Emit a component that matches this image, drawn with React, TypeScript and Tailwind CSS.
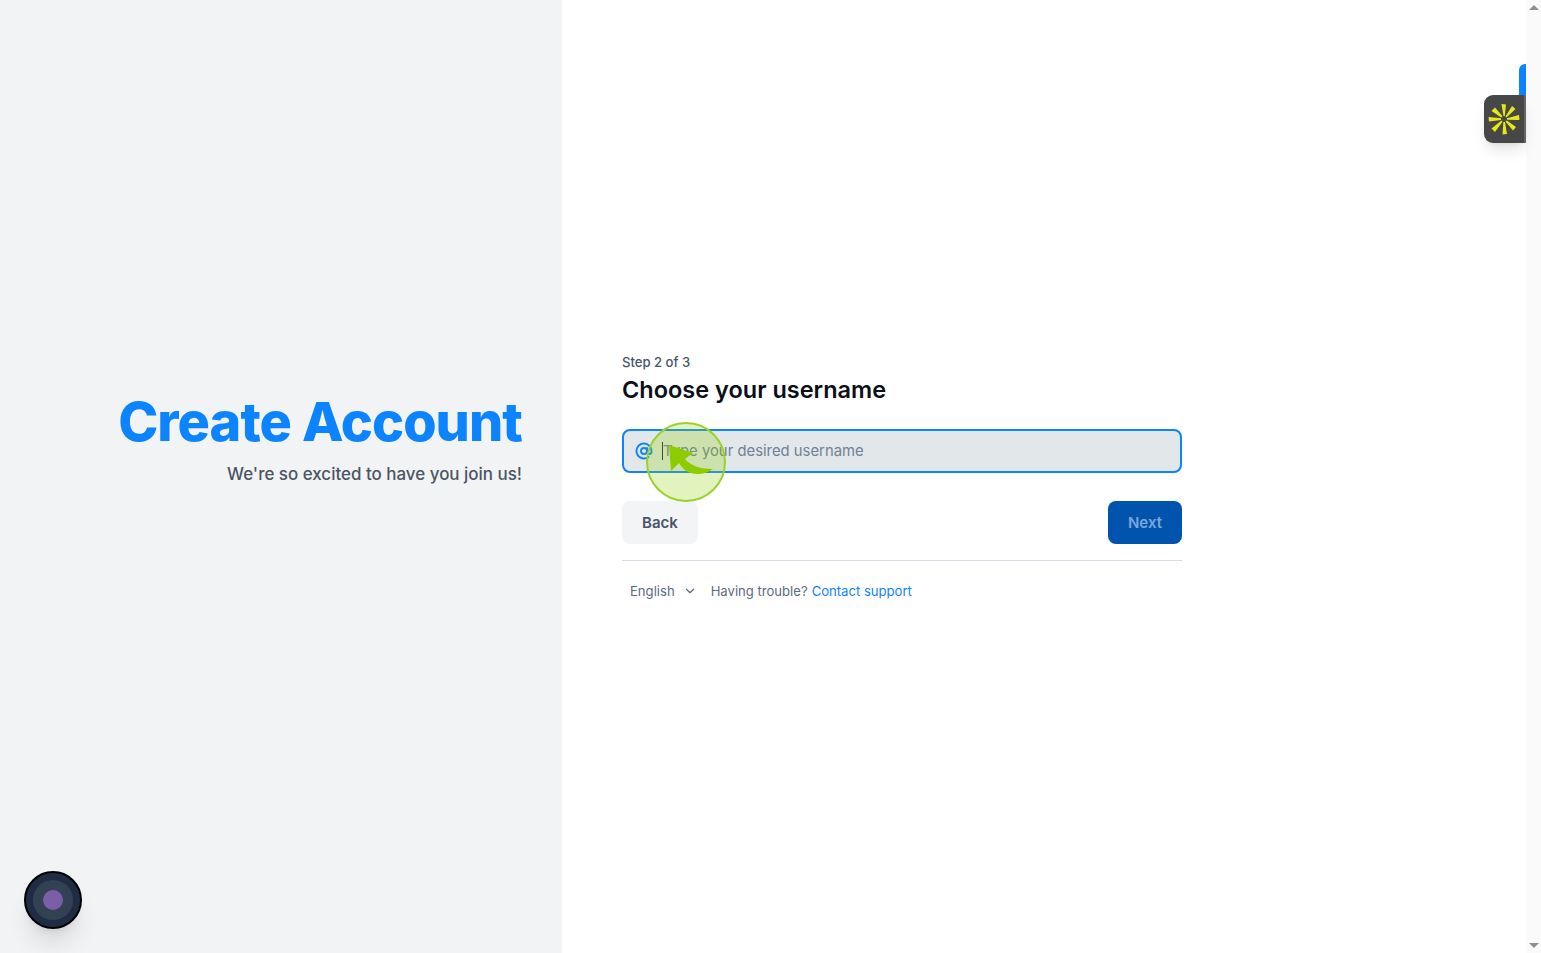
import React from "react";
import { AtSign, ChevronDown } from "lucide-react";

const font = { fontFamily: "Inter, 'Noto Sans', sans-serif" };

const Scrollbar = () => (
  <div className="w-[15px] h-full bg-[#fafafa] flex flex-col items-center justify-between shrink-0 py-[5px]">
    <div className="w-0 h-0 border-x-[5px] border-x-transparent border-b-[5px] border-b-[#8f8f8f]" />
    <div className="w-0 h-0 border-x-[5px] border-x-transparent border-t-[5px] border-t-[#8f8f8f]" />
  </div>
);

const ClickMarker = () => (
  <div className="absolute left-[22px] top-[-9px] w-[80px] h-[80px] rounded-full border-2 border-[#9bd22a] bg-[#8fce00]/25 pointer-events-none">
    <svg viewBox="0 0 80 80" className="absolute -left-[2px] -top-[2px] w-[80px] h-[80px]">
      <path
        d="M23 23 L47 31 L39 37 C45 44 55 47 67 47 C60 52 52 53 45 51 C40 50 36 46 33 41 L25 49 Z"
        fill="#8ccc00"
      />
    </svg>
  </div>
);

const HelperTab = () => (
  <div className="absolute top-[64px] right-[15px] flex flex-col items-end">
    <div className="w-[7px] h-[31px] bg-[#0d84ff] rounded-tl-[6px]" />
    <div className="w-[42px] h-[48px] bg-[#474747] rounded-l-[9px] border-r-2 border-r-[#666666] shadow-lg flex items-center justify-center">
      <svg viewBox="0 0 32 32" className="w-[32px] h-[32px]" fill="#e6ea12">
        <path d="M13.5 1 L18 1.5 L16.8 13 L15.5 13 Z" />
        <path d="M24 3 L27.5 6 L18.5 14.5 L17.5 13.5 Z" />
        <path d="M31 12 L31.5 17 L19 16.8 L19 15.2 Z" />
        <path d="M28 24 L25 27.5 L17.5 18.5 L18.8 17.5 Z" />
        <path d="M19 31 L14.5 31.5 L15.4 19 L17 19 Z" />
        <path d="M7 29 L3.5 25.5 L13.5 17.5 L14.5 18.8 Z" />
        <path d="M1 18.5 L0.5 14 L13 15.3 L13 17 Z" />
        <path d="M3.5 8 L7 4.5 L14.5 13.3 L13.2 14.5 Z" />
      </svg>
    </div>
  </div>
);

export default function App() {
  return (
    <div className="relative flex h-[953px] w-full overflow-hidden bg-white" style={font}>
      <div className="relative w-[562px] h-full bg-[#f2f3f5] flex flex-col items-end justify-center pr-10 pb-[73px] shrink-0">
        <h1 className="text-[54px] leading-[60px] font-extrabold text-[#0d84ff] tracking-[-0.95px]">Create Account</h1>
        <p className="mt-[8px] text-[16.95px] leading-[28px] font-medium text-[#4b5563]">We're so excited to have you join us!</p>

        <div className="absolute left-[24px] bottom-[24px] w-[58px] h-[58px] rounded-full bg-[#1f2c44] border-2 border-black shadow-xl flex items-center justify-center">
          <div className="w-[40px] h-[40px] rounded-full bg-[#334155] flex items-center justify-center">
            <div className="w-[20px] h-[20px] rounded-full bg-[#7b5ea7]" />
          </div>
        </div>
      </div>

      <div className="flex-1 h-full flex flex-col justify-center pl-[60px]">
        <div className="w-[560px]">
          <p className="text-[13.1px] leading-[20px] font-medium text-[#475569]">Step 2 of 3</p>
          <h2 className="mt-[2px] text-[23.5px] leading-[32px] font-semibold text-[#0b0f19]">Choose your username</h2>

          <div className="relative mt-[23px] h-[44px] rounded-lg border-2 border-[#0d84ff] bg-[#e2e7ea] flex items-center pl-[11px]">
            <AtSign className="w-[18px] h-[18px] text-[#0d84ff] shrink-0" strokeWidth={2.5} />
            <span className="ml-[9px] w-px h-[18px] bg-[#1f2937] shrink-0" />
            <span className="text-[14.85px] text-[#718096]">Type your desired username</span>
            <ClickMarker />
          </div>

          <div className="mt-[28px] flex justify-between">
            <button className="h-[43px] w-[76px] pt-px rounded-lg bg-[#f3f4f6] text-[15px] font-semibold text-[#475569]">Back</button>
            <button className="h-[43px] w-[74px] pt-px rounded-lg bg-[#0054ae] text-[15px] font-semibold text-[#7ba6d8]">Next</button>
          </div>

          <div className="mt-[16px] border-t border-[#d8dee6] pt-[20px] pl-[8px] flex items-center text-[13.1px] leading-[20px] text-[#5b6b80]">
            <span>English</span>
            <ChevronDown className="ml-[8px] w-[14px] h-[14px]" />
            <span className="ml-[14px]">Having trouble?</span>
            <span className="ml-[4px] text-[#0d84ff]">Contact support</span>
          </div>
        </div>
      </div>

      <HelperTab />
      <Scrollbar />
    </div>
  );
}
